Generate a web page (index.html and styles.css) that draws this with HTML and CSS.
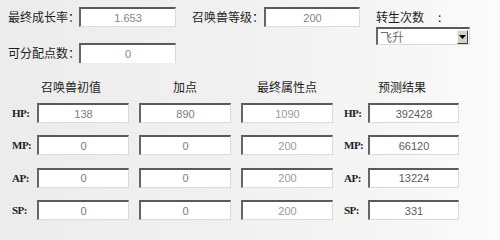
FILE: index.html
```html
<!DOCTYPE html>
<html lang="zh-CN">
<head>
<meta charset="utf-8">
<title>召唤兽属性计算</title>
<link rel="stylesheet" href="styles.css">
</head>
<body>
<div class="page">
  <div class="top">
    <div class="lbl r1c1">最终成长率：</div>
    <div class="box r1c2">1.653</div>
    <div class="lbl r1c4">召唤兽等级：</div>
    <div class="box r1c5">200</div>
    <div class="lbl r1c7">转生次数<span class="colon">:</span></div>
    <div class="select">
      <span class="sel-text">飞升</span>
      <span class="sel-btn"><svg width="7" height="4" viewBox="0 0 7 4"><path d="M0 0H7L3.5 4Z" fill="#000"/></svg></span>
    </div>
    <div class="lbl r3c1">可分配点数：</div>
    <div class="box clip r3c2">0</div>
  </div>

  <div class="table">
    <div class="row head">
      <div class="side"></div>
      <div class="hcell h1">召唤兽初值</div>
      <div class="hcell h2">加点</div>
      <div class="hcell h3">最终属性点</div>
      <div class="side2"></div>
      <div class="hcell h4">预测结果</div>
    </div>
    <div class="row">
      <div class="side">HP:</div>
      <div class="box c1">138</div>
      <div class="box c2">890</div>
      <div class="box c3">1090</div>
      <div class="side2">HP:</div>
      <div class="box c4">392428</div>
    </div>
    <div class="row">
      <div class="side">MP:</div>
      <div class="box c1">0</div>
      <div class="box c2">0</div>
      <div class="box c3">200</div>
      <div class="side2">MP:</div>
      <div class="box c4">66120</div>
    </div>
    <div class="row">
      <div class="side">AP:</div>
      <div class="box c1">0</div>
      <div class="box c2">0</div>
      <div class="box c3">200</div>
      <div class="side2">AP:</div>
      <div class="box c4">13224</div>
    </div>
    <div class="row">
      <div class="side">SP:</div>
      <div class="box c1">0</div>
      <div class="box c2">0</div>
      <div class="box c3">200</div>
      <div class="side2">SP:</div>
      <div class="box c4">331</div>
    </div>
  </div>
</div>
</body>
</html>
```
FILE: styles.css
```css
html, body {
  margin: 0;
  padding: 0;
}
body {
  width: 500px;
  height: 223px;
  overflow: hidden;
  background: linear-gradient(to right, #ececec 0%, #f1f1f1 50%, #f7f7f7 85%, #fbfbfb 100%);
  font-family: "Noto Sans CJK SC", "Liberation Sans", sans-serif;
  font-size: 12px;
  color: #1e1e1e;
}
.page {
  width: 500px;
  height: 223px;
}
.top {
  display: grid;
  grid-template-columns: 71px 97px 16px 72px 96px 16px 94px;
  grid-template-rows: 20px 16px 20px;
  padding: 7px 0 0 8px;
}
.lbl {
  display: flex;
  align-items: center;
  white-space: nowrap;
  font-size: 12px;
  line-height: 14px;
}
.r1c1 { grid-column: 1; grid-row: 1; }
.r1c2 { grid-column: 2; grid-row: 1; }
.r1c4 { grid-column: 4; grid-row: 1; }
.r1c5 { grid-column: 5; grid-row: 1; }
.r1c7 { grid-column: 7; grid-row: 1; }
.r3c1 { grid-column: 1; grid-row: 3; }
.r3c2 { grid-column: 2; grid-row: 3; }
.colon {
  margin-left: 14px;
}
.box {
  box-sizing: border-box;
  height: 20px;
  background: #fff;
  border-top: 2px solid #5a5a5a;
  border-left: 2px solid #666;
  border-right: 1px solid #dcdad4;
  border-bottom: 1px solid #dcdad4;
  display: flex;
  align-items: center;
  justify-content: center;
  font-family: "Liberation Sans", "DejaVu Sans", sans-serif;
  font-size: 11px;
  color: #858585;
}
.box.clip {
  border-bottom: none;
}
.select {
  grid-column: 7;
  grid-row: 2 / span 2;
  align-self: start;
  box-sizing: border-box;
  height: 18px;
  width: 94px;
  background: #fff;
  border-top: 2px solid #5a5a5a;
  border-left: 2px solid #666;
  border-right: 1px solid #dcdad4;
  border-bottom: 1px solid #dcdad4;
  display: flex;
  align-items: center;
  justify-content: space-between;
}
.sel-text {
  padding-left: 2px;
  font-size: 12px;
  line-height: 14px;
  color: #6e6e6e;
}
.sel-btn {
  box-sizing: border-box;
  width: 11px;
  height: 14px;
  margin-right: 1px;
  background: #d4d0c8;
  border-top: 1px solid #f4f4f4;
  border-left: 1px solid #f4f4f4;
  border-right: 1px solid #404040;
  border-bottom: 1px solid #404040;
  display: flex;
  align-items: center;
  justify-content: center;
}
.table {
  margin-top: 16px;
  display: flex;
  flex-direction: column;
  gap: 12.4px;
}
.row {
  display: flex;
  align-items: center;
  height: 20px;
}
.row.head {
  height: 16px;
  margin-bottom: -4.4px;
}
.side, .side2 {
  box-sizing: border-box;
  font-family: "Liberation Serif", "DejaVu Serif", serif;
  font-weight: bold;
  font-size: 11px;
  letter-spacing: -0.5px;
  color: #222;
}
.side {
  width: 37px;
  padding-left: 12px;
}
.side2 {
  width: 35px;
  padding-left: 11px;
}
.c1, .c2, .c3 {
  width: 92px;
  margin-right: 10px;
}
.c3 {
  margin-right: 0;
  color: #9a9a9a;
}
.c1, .c2 {
  color: #7c7c7c;
}
.c4 {
  width: 91px;
  color: #5c5c5c;
}
.hcell {
  font-size: 12px;
  line-height: 16px;
  white-space: nowrap;
  color: #1e1e1e;
}
.h1 { width: 92px; margin-right: 10px; padding-left: 4px; box-sizing: border-box; }
.h2 { width: 92px; margin-right: 10px; text-align: center; }
.h3 { width: 92px; text-align: center; }
.h4 { width: 91px; padding-left: 10px; box-sizing: border-box; }
```
